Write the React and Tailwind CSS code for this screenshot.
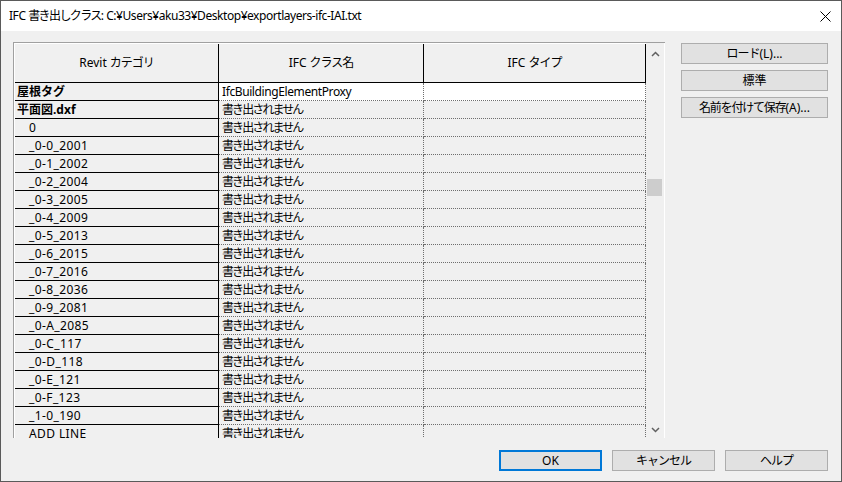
import React from "react";

const rows = [
  { name: "屋根タグ", bold: true, cls: "IfcBuildingElementProxy", white: true },
  { name: "平面図.dxf", bold: true },
  { name: "0" },
  { name: "_0-0_2001" },
  { name: "_0-1_2002" },
  { name: "_0-2_2004" },
  { name: "_0-3_2005" },
  { name: "_0-4_2009" },
  { name: "_0-5_2013" },
  { name: "_0-6_2015" },
  { name: "_0-7_2016" },
  { name: "_0-8_2036" },
  { name: "_0-9_2081" },
  { name: "_0-A_2085" },
  { name: "_0-C_117" },
  { name: "_0-D_118" },
  { name: "_0-E_121" },
  { name: "_0-F_123" },
  { name: "_1-0_190" },
  { name: "ADD LINE" },
];

function Btn({ children, primary }) {
  return (
    <div
      className={
        "h-[21px] flex items-center justify-center bg-[#e1e1e1] text-[12px] text-black " +
        (primary ? "border-2 border-[#0078d7]" : "border border-[#adadad]")
      }
    >
      {children}
    </div>
  );
}

export default function App() {
  return (
    <div className="w-[842px] h-[482px] border border-[#5a5a5a] bg-[#f0f0f0] flex flex-col font-['Noto_Sans','Noto_Sans_CJK_JP',sans-serif] text-black overflow-hidden">
      {/* title bar */}
      <div className="h-[30px] bg-white flex items-center justify-between pl-[8px] pr-[10px] shrink-0">
        <div className="text-[12px] whitespace-nowrap tracking-[-0.45px]">
          IFC <span className="tracking-[-1.6px]">書き出しクラス</span>: C:¥Users¥aku33¥Desktop¥exportlayers-ifc-IAI.txt
        </div>
        <svg width="11" height="11" viewBox="0 0 11 11">
          <path d="M0.5 0.5 L10.5 10.5 M10.5 0.5 L0.5 10.5" stroke="#000" strokeWidth="1" />
        </svg>
      </div>

      {/* body */}
      <div className="flex flex-col flex-1">
        <div className="flex pl-[12px] pt-[11px]">
          {/* grid */}
          <div className="w-[652px] h-[396px] border-l border-t border-[#a0a0a0] flex overflow-hidden">
            <div className="w-[632px] h-full border-l border-t border-white flex flex-col overflow-hidden">
              {/* header */}
              <div className="flex h-[39px] shrink-0 border-b border-black text-[12px]">
                <div className="w-[204px] border-r border-black flex items-center justify-center">
                  Revit <span className="tracking-[-1px] ml-[3px]">カテゴリ</span>
                </div>
                <div className="w-[205px] border-r border-black flex items-center justify-center">
                  IFC <span className="tracking-[-1px] ml-[3px]">クラス名</span>
                </div>
                <div className="w-[222px] border-r border-black flex items-center justify-center">
                  IFC <span className="tracking-[-1px] ml-[3px]">タイプ</span>
                </div>
              </div>
              {rows.map((r, i) => (
                <div key={i} className="flex h-[18px] shrink-0 text-[12px] leading-[17px]">
                  <div
                    className={
                      "w-[204px] border-r border-b border-black whitespace-nowrap " +
                      (r.bold ? "font-bold pl-[2px]" : "pl-[14px] tracking-[0.4px]")
                    }
                  >
                    {r.name}
                  </div>
                  <div
                    className={
                      "w-[205px] border-r border-b border-dotted border-[#6e6e6e] pl-[3px] whitespace-nowrap " +
                      (r.white ? "bg-white tracking-[-0.4px]" : "tracking-[-1.9px]")
                    }
                  >
                    {r.cls || "書き出されません"}
                  </div>
                  <div
                    className={
                      "w-[222px] border-r border-b border-dotted border-[#6e6e6e] " +
                      (r.white ? "bg-white" : "")
                    }
                  ></div>
                </div>
              ))}
            </div>
            {/* scrollbar */}
            <div className="w-[19px] h-full border-r border-white flex flex-col items-center justify-between pt-[8px] pb-[5px] relative">
              <svg width="9" height="6" viewBox="0 0 9 6">
                <path d="M1 5 L4.5 1.5 L8 5" stroke="#606060" strokeWidth="1.5" fill="none" />
              </svg>
              <div className="absolute left-[1px] top-[136px] w-[15px] h-[17px] bg-[#cdcdcd]"></div>
              <svg width="9" height="6" viewBox="0 0 9 6">
                <path d="M1 1 L4.5 4.5 L8 1" stroke="#606060" strokeWidth="1.5" fill="none" />
              </svg>
            </div>
          </div>

          {/* right buttons */}
          <div className="ml-[16px] w-[147px] pt-[1px] flex flex-col gap-[6px]">
            <Btn><span className="tracking-[-1px]">ロード</span>(L)...</Btn>
            <Btn>標準</Btn>
            <Btn><span className="tracking-[-1.2px]">名前を付けて保存</span>(A)...</Btn>
          </div>
        </div>

        {/* bottom buttons */}
        <div className="flex justify-end gap-[10px] pr-[13px] mt-[12px]">
          <div className="w-[103px]"><Btn primary>OK</Btn></div>
          <div className="w-[103px]"><Btn><span className="tracking-[-1px]">キャンセル</span></Btn></div>
          <div className="w-[103px]"><Btn><span className="tracking-[-1px]">ヘルプ</span></Btn></div>
        </div>
      </div>
    </div>
  );
}
